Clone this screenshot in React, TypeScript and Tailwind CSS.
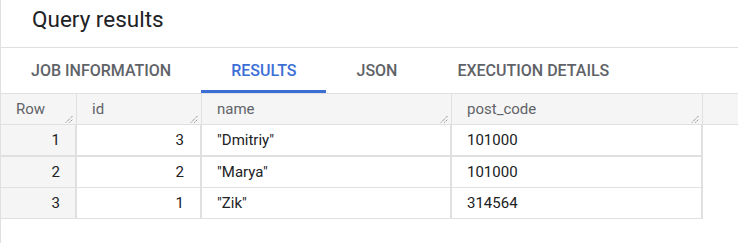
import React from 'react';

type Row = { n: number; id: number; name: string; postCode: string };

const rows: Row[] = [
  { n: 1, id: 3, name: '"Dmitriy"', postCode: '101000' },
  { n: 2, id: 2, name: '"Marya"', postCode: '101000' },
  { n: 3, id: 1, name: '"Zik"', postCode: '314564' },
];

const tabs = ['JOB INFORMATION', 'RESULTS', 'JSON', 'EXECUTION DETAILS'];

const ResizeHandle: React.FC = () => (
  <svg
    width="8"
    height="8"
    viewBox="0 0 8 8"
    className="absolute bottom-[1px] right-[3px]"
  >
    <path d="M1 7.5L7.5 1M4.5 7.5L7.5 4.5" stroke="#5f6368" strokeWidth="1" strokeDasharray="1 1" />
  </svg>
);

const HeaderCell: React.FC<{ label?: string; width: string; handle?: boolean }> = ({ label, width, handle }) => (
  <div className={`relative flex h-full shrink-0 items-center border-r border-[#e0e0e0] pl-[15px] ${width}`}>
    {label}
    {handle && <ResizeHandle />}
  </div>
);

const App: React.FC = () => {
  return (
    <div
      className="h-[243px] w-[738px] overflow-hidden border-l border-[#e0e0e0] bg-white text-[#202124]"
      style={{ fontFamily: 'Roboto, "Liberation Sans", sans-serif' }}
    >
      <div className="flex h-[48px] items-center border-b border-[#e0e0e0] pb-[10px] pl-[31px]">
        <h1 className="text-[22.5px] leading-7">Query results</h1>
      </div>

      <div className="flex h-[46px] border-b border-[#e0e0e0]">
        {tabs.map((tab) => {
          const active = tab === 'RESULTS';
          return (
            <div
              key={tab}
              className={`flex items-center border-b-[3px] px-[30px] pt-[3px] text-[16px] font-medium ${
                active ? 'border-[#3b6fd6] text-[#3b6fd6]' : 'border-transparent text-[#5f6368]'
              }`}
            >
              {tab}
            </div>
          );
        })}
      </div>

      <div className="text-[15px]">
        <div className="flex h-[31px] border-b border-[#e0e0e0] bg-[#f5f5f5] text-[#5f6368]">
          <HeaderCell label="Row" width="w-[76px]" handle />
          <HeaderCell label="id" width="w-[125px]" handle />
          <HeaderCell label="name" width="w-[250px]" handle />
          <HeaderCell label="post_code" width="w-[251px]" handle />
          <div className="flex-1" />
        </div>

        {rows.map((r, i) => (
          <div
            key={r.n}
            className={`flex w-[702px] border-[#e0e0e0] ${i === 0 ? 'h-[32px] border-b-2' : 'h-[31px] border-b'}`}
          >
            <div className="flex w-[76px] shrink-0 items-center justify-end border-r-2 border-[#e0e0e0] bg-[#f5f5f5] pr-[15px]">
              {r.n}
            </div>
            <div className="flex w-[125px] shrink-0 items-center justify-end border-r-2 border-[#e0e0e0] pr-[16px]">
              {r.id}
            </div>
            <div className="flex w-[250px] shrink-0 items-center border-r-2 border-[#e0e0e0] pl-[15px]">
              {r.name}
            </div>
            <div className="flex w-[251px] shrink-0 items-center border-r-2 border-[#e0e0e0] pl-[15px]">
              {r.postCode}
            </div>
          </div>
        ))}
      </div>
    </div>
  );
};

export default App;
